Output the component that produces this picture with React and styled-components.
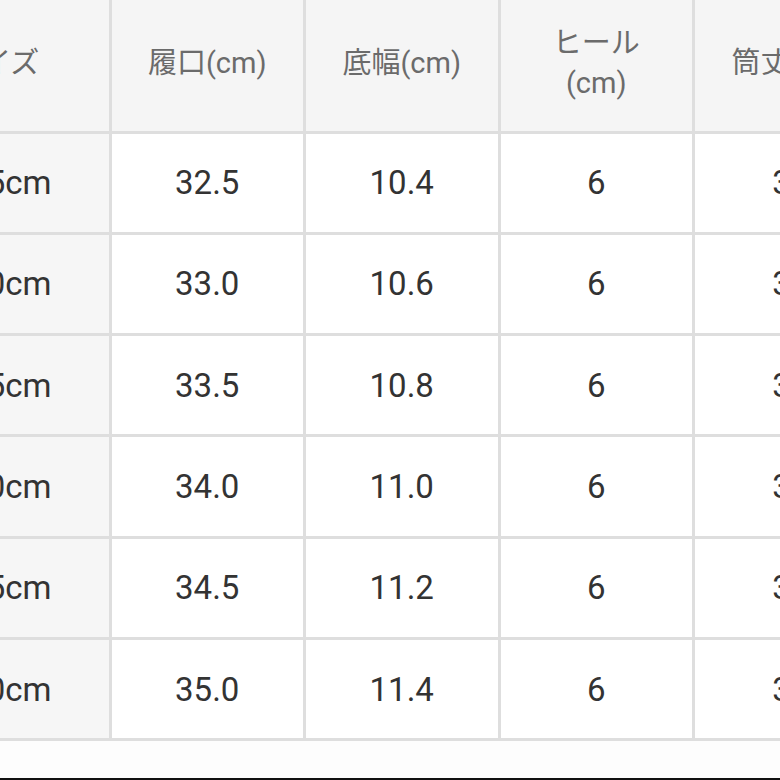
import React from "react";
import styled, { createGlobalStyle } from "styled-components";

const Global = createGlobalStyle`
  html, body { margin: 0; padding: 0; background: #fdfdfd; }
  body { font-family: Roboto, "Noto Sans CJK JP", sans-serif; overflow: hidden; }
`;

const Page = styled.div`
  width: 780px;
  height: 780px;
  overflow: hidden;
  display: flex;
  flex-direction: column;
  background: #fdfdfd;
`;

const Viewport = styled.div`
  flex: 1;
  overflow: hidden;
`;

const Table = styled.div`
  display: grid;
  grid-template-columns: 224.5px repeat(4, 191.5px);
  grid-template-rows: 130.5px repeat(6, 98.33px);
  gap: 3px;
  background: #dedede;
  margin-left: -116px;
  width: max-content;
  padding-bottom: 3px;
`;

const HeadCell = styled.div`
  background: #f5f5f5;
  color: #6b6b6b;
  font-size: 29px;
  line-height: 40px;
  display: flex;
  align-items: center;
  justify-content: center;
  text-align: center;
  padding-bottom: 4px;
`;

const Cell = styled.div`
  background: ${(p) => (p.$label ? "#f6f6f6" : "#ffffff")};
  color: #333333;
  font-size: 33px;
  display: flex;
  align-items: center;
  justify-content: center;
`;

const BottomEdge = styled.div`
  height: 2px;
  background: #111;
`;

const headers = [
  ["サイズ"],
  ["履口(cm)"],
  ["底幅(cm)"],
  ["ヒール", "(cm)"],
  ["筒丈(cm)"],
];

const rows = [
  ["22.5cm", "32.5", "10.4", "6", "36"],
  ["23.0cm", "33.0", "10.6", "6", "36"],
  ["23.5cm", "33.5", "10.8", "6", "36"],
  ["24.0cm", "34.0", "11.0", "6", "36"],
  ["24.5cm", "34.5", "11.2", "6", "36"],
  ["25.0cm", "35.0", "11.4", "6", "36"],
];

export default function App() {
  return (
    <Page>
      <Global />
      <Viewport>
        <Table>
          {headers.map((h, i) => (
            <HeadCell key={"h" + i}>
              <div>
                {h.map((line, j) => (
                  <div key={j}>{line}</div>
                ))}
              </div>
            </HeadCell>
          ))}
          {rows.map((r, ri) =>
            r.map((v, ci) => (
              <Cell key={ri + "-" + ci} $label={ci === 0}>
                {v}
              </Cell>
            ))
          )}
        </Table>
      </Viewport>
      <BottomEdge />
    </Page>
  );
}
